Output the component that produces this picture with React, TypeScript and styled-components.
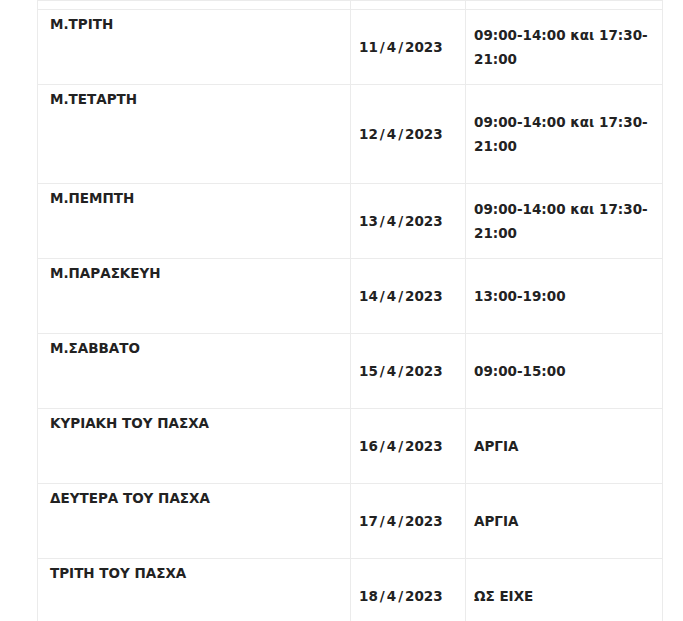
import React, { FC } from 'react';
import styled, { createGlobalStyle } from 'styled-components';

const GlobalStyle = createGlobalStyle`
  html, body {
    margin: 0;
    padding: 0;
    background: #ffffff;
  }
  body {
    font-family: "DejaVu Sans", Verdana, sans-serif;
    color: #222222;
  }
`;

const Page = styled.div`
  width: 683px;
  height: 621px;
  overflow: hidden;
  padding-left: 37px;
  box-sizing: border-box;
`;

const Table = styled.table`
  width: 625px;
  border-collapse: collapse;
  table-layout: fixed;
  font-size: 13.5px;
  font-weight: bold;
  line-height: 24px;
`;

const Row = styled.tr<{ $height: number }>`
  height: ${(props) => props.$height}px;
`;

const Cell = styled.td`
  border: 1px solid #ebebeb;
  padding: 0 8px;
  vertical-align: middle;
`;

const DayCell = styled(Cell)`
  vertical-align: top;
  padding: 2px 13px 0 12px;
`;

// the slash in the original face is much wider than DejaVu's
const Slash = styled.span`
  margin: 0 2px;
`;

const DateText: FC<{ value: string }> = ({ value }) => {
  const parts = value.split('/');
  return (
    <>
      {parts.map((part, i) => (
        <React.Fragment key={i}>
          {i > 0 && <Slash>/</Slash>}
          {part}
        </React.Fragment>
      ))}
    </>
  );
};

type Entry = { day: string; date: string; hours: string; height: number };

const entries: Entry[] = [
  { day: 'Μ.ΤΡΙΤΗ', date: '11/4/2023', hours: '09:00-14:00 και 17:30-21:00', height: 75 },
  { day: 'Μ.ΤΕΤΑΡΤΗ', date: '12/4/2023', hours: '09:00-14:00 και 17:30-21:00', height: 99 },
  { day: 'Μ.ΠΕΜΠΤΗ', date: '13/4/2023', hours: '09:00-14:00 και 17:30-21:00', height: 75 },
  { day: 'Μ.ΠΑΡΑΣΚΕΥΗ', date: '14/4/2023', hours: '13:00-19:00', height: 75 },
  { day: 'Μ.ΣΑΒΒΑΤΟ', date: '15/4/2023', hours: '09:00-15:00', height: 75 },
  { day: 'ΚΥΡΙΑΚΗ ΤΟΥ ΠΑΣΧΑ', date: '16/4/2023', hours: 'ΑΡΓΙΑ', height: 75 },
  { day: 'ΔΕΥΤΕΡΑ ΤΟΥ ΠΑΣΧΑ', date: '17/4/2023', hours: 'ΑΡΓΙΑ', height: 75 },
  { day: 'ΤΡΙΤΗ ΤΟΥ ΠΑΣΧΑ', date: '18/4/2023', hours: 'ΩΣ ΕΙΧΕ', height: 75 },
];

const App: FC = () => {
  return (
    <Page>
      <GlobalStyle />
      <Table>
        <colgroup>
          <col style={{ width: 313 }} />
          <col style={{ width: 115 }} />
          <col style={{ width: 197 }} />
        </colgroup>
        <tbody>
          <Row $height={9}>
            <Cell />
            <Cell />
            <Cell />
          </Row>
          {entries.map((item) => (
            <Row key={item.date} $height={item.height}>
              <DayCell>{item.day}</DayCell>
              <Cell>
                <DateText value={item.date} />
              </Cell>
              <Cell>{item.hours}</Cell>
            </Row>
          ))}
        </tbody>
      </Table>
    </Page>
  );
};

export default App;
